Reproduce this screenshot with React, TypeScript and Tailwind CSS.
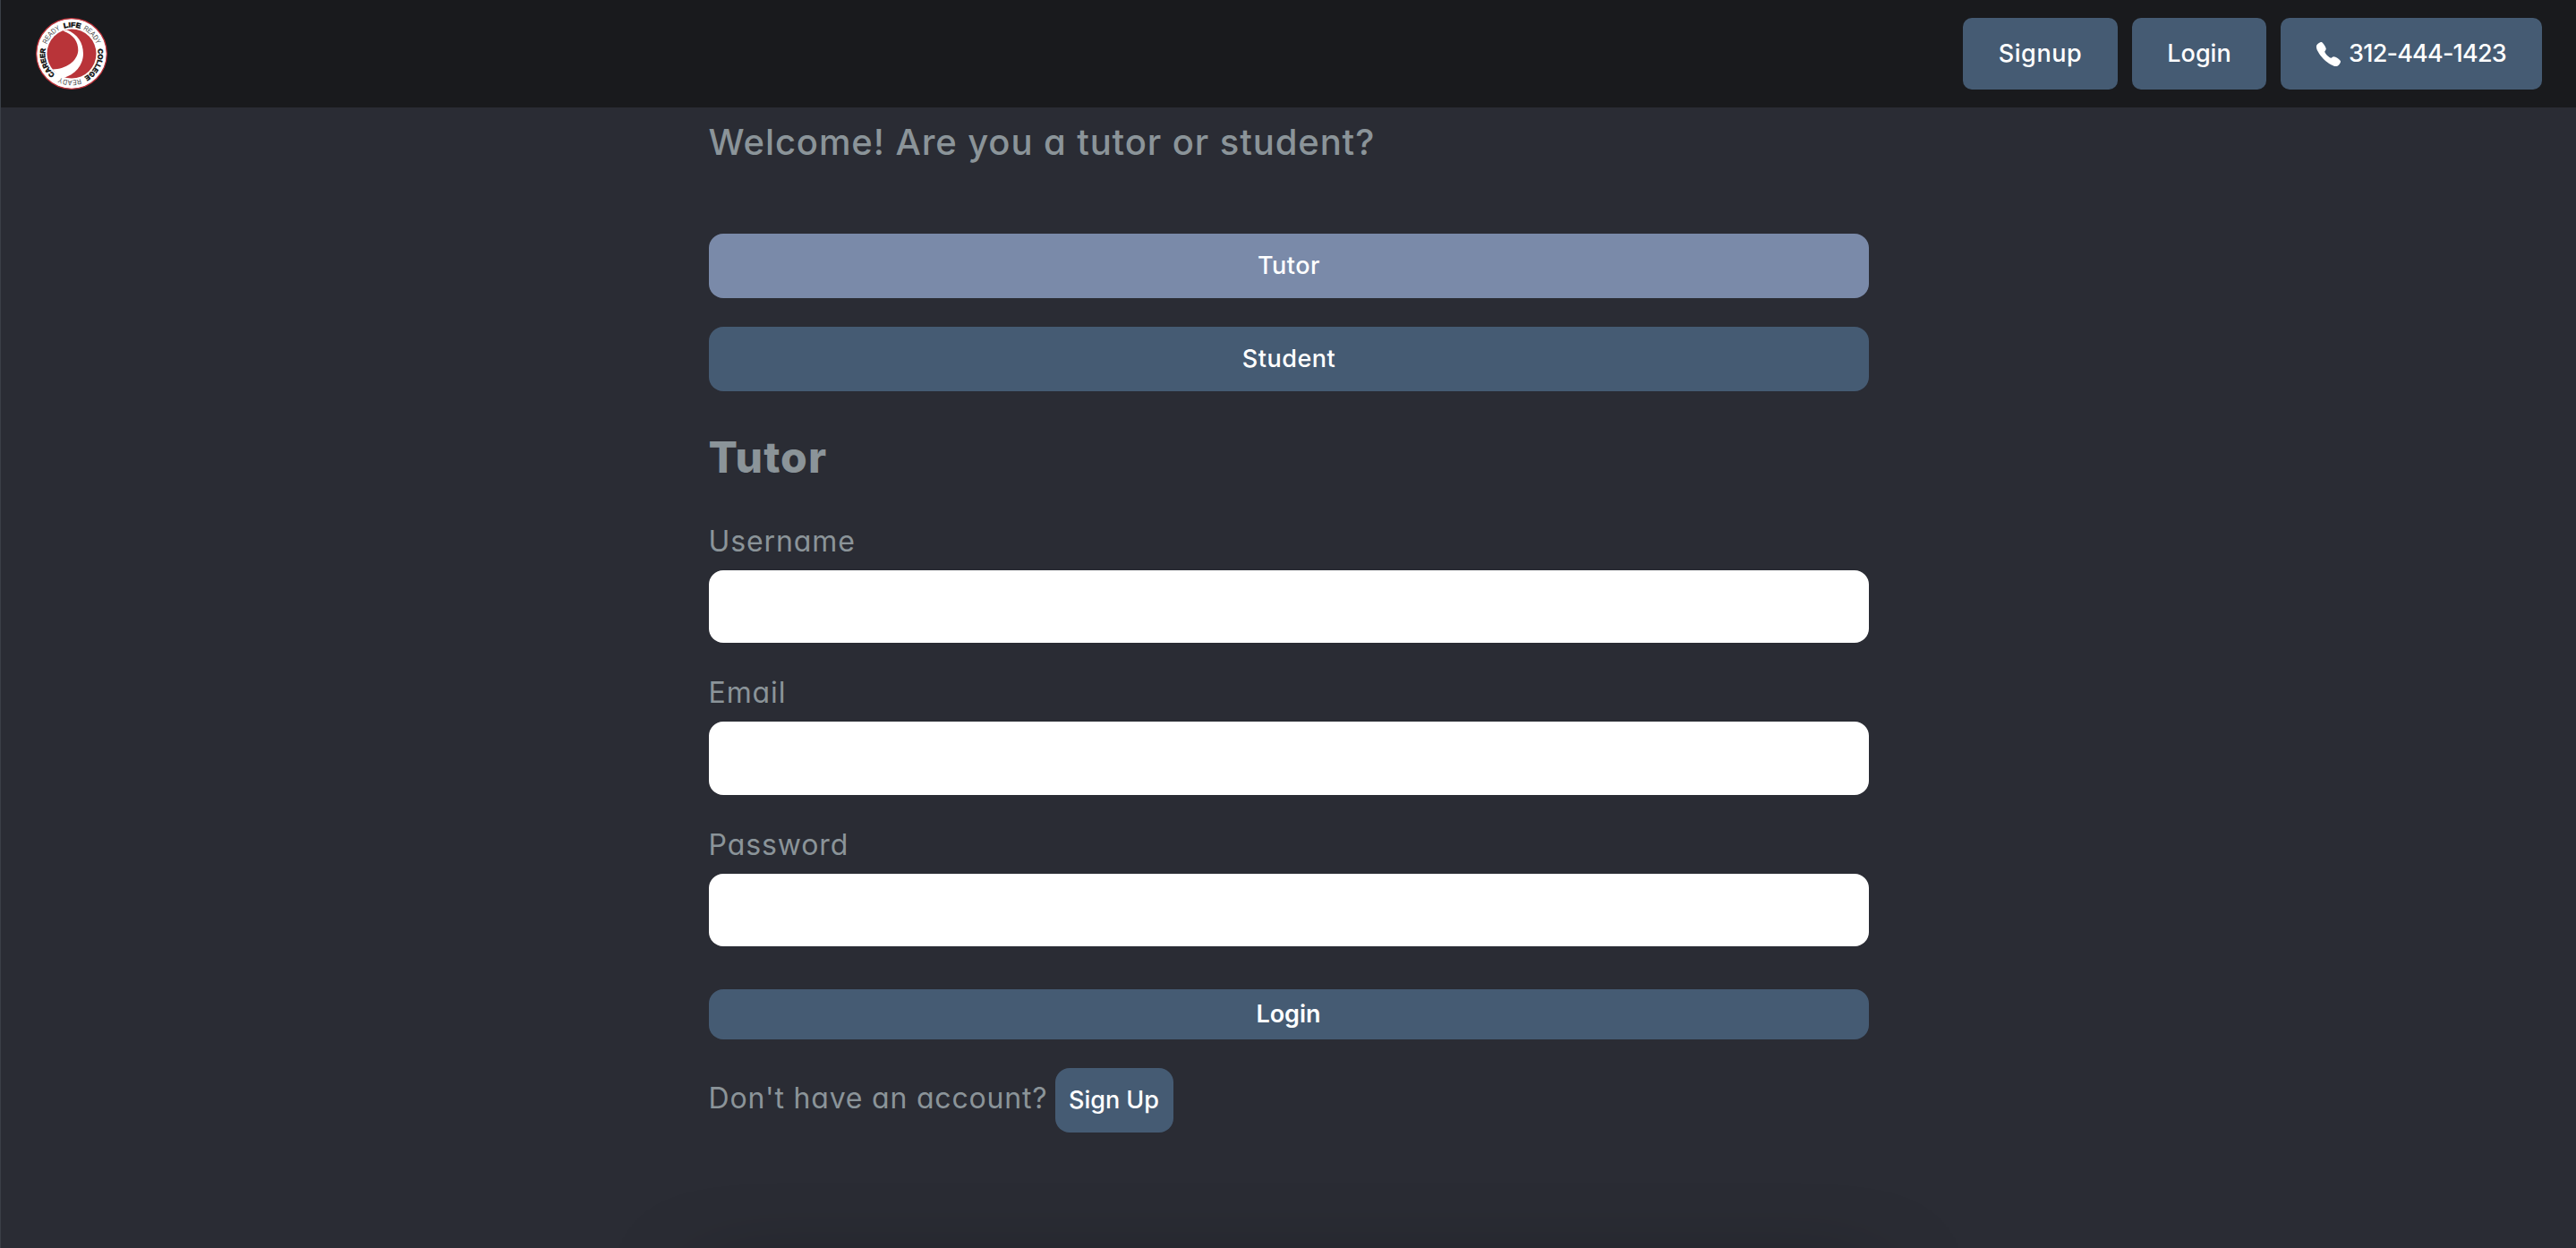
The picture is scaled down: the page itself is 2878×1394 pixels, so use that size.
import React from "react";
import { clsx } from "clsx";
import { IoCall } from "react-icons/io5";

const navButton =
  "flex h-20 items-center justify-center rounded-[10px] bg-[#455b73] text-[27px] font-medium text-white";

const ringWords = [
  { text: "CAREER", start: 3.1, length: 32, bold: true },
  { text: "READY", start: 40, length: 23, bold: false },
  { text: "LIFE", start: 67.3, length: 18.5, bold: true },
  { text: "READY", start: 88.8, length: 23, bold: false },
  { text: "COLLEGE", start: 117, length: 37, bold: true },
  { text: "READY", start: 158.6, length: 24, bold: false },
];

function Logo() {
  return (
    <svg width="80" height="80" viewBox="0 0 80 80" aria-label="College Ready">
      <defs>
        <path
          id="ring"
          d="M23.8 64.9 A29.7 29.7 0 0 1 56.2 15.1 A29.7 29.7 0 0 1 23.8 64.9"
        />
      </defs>
      <circle cx="40" cy="40" r="39.3" fill="#ffffff" stroke="#c4343c" strokeWidth="1.2" />
      <circle cx="40" cy="40" r="27.5" fill="#b93439" />
      <path
        d="M30.5 14.6 C42 18.5 47.6 27 47.3 36.5 C46.6 48 34 57.3 18.8 57.4 C22 61.8 26 65 31 66.8 C43.5 63.8 53 53 53 40 C53 27.5 46.5 18 34.5 13.2 Z"
        fill="#ffffff"
      />
      <g fontFamily="Liberation Sans">
        {ringWords.map((word) => (
          <text
            key={word.start}
            fontSize={word.bold ? 7.8 : 8.2}
            fontWeight={word.bold ? 700 : 400}
            fill={word.bold ? "#0c0c0c" : "#444444"}
            stroke={word.bold ? "#0c0c0c" : "none"}
            strokeWidth="0.5"
          >
            <textPath
              href="#ring"
              startOffset={word.start}
              textLength={word.length}
              lengthAdjust="spacingAndGlyphs"
            >
              {word.text}
            </textPath>
          </text>
        ))}
      </g>
    </svg>
  );
}

function RoleButton({ label, active }: { label: string; active?: boolean }) {
  return (
    <button
      type="button"
      className={clsx(
        "flex h-18 w-full items-center justify-center rounded-2xl pl-px text-[27px] font-medium tracking-[0.5px] text-white",
        active ? "bg-[#7a8aa9]" : "bg-[#455b73]",
      )}
    >
      <span>{label}</span>
    </button>
  );
}

function Field({ label, type }: { label: string; type: string }) {
  return (
    <label className="block">
      <span className="block h-12 text-[32px] leading-[47px] tracking-[0.9px]">{label}</span>
      <input
        type={type}
        className="mt-2 block h-[81.5px] w-full rounded-2xl bg-white px-6 text-black"
      />
    </label>
  );
}

export default function App() {
  return (
    <div className="flex h-[1394px] flex-col overflow-hidden border-l border-[#3a3f47] bg-[#2a2c34] font-[Inter,sans-serif] text-[#8b9499] [font-feature-settings:'cv11']">
      <header className="flex h-30 shrink-0 items-center justify-between bg-[#191a1d] pr-[38px] pl-[39px]">
        <Logo />
        <nav className="flex gap-4">
          <button type="button" className={clsx(navButton, "w-[173px] tracking-[0.6px]")}>
            <span>Signup</span>
          </button>
          <button type="button" className={clsx(navButton, "w-[150px]")}>
            <span>Login</span>
          </button>
          <button type="button" className={clsx(navButton, "w-[292px] gap-[7px] pr-0.5")}>
            <IoCall className="size-[31px]" />
            <span className="tracking-[-0.8px]">312-444-1423</span>
          </button>
        </nav>
      </header>

      <main className="mx-auto w-[1296px] grow pt-[9px]">
        <p className="text-[40px] leading-[60px] font-medium tracking-[0.9px]">
          Welcome! Are you a tutor or student?
        </p>
        <div className="mt-18 flex flex-col gap-8">
          <RoleButton label="Tutor" active />
          <RoleButton label="Student" />
        </div>

        <h1 className="mt-[38px] text-[48px] leading-[72px] font-extrabold tracking-[1.1px]">
          Tutor
        </h1>
        <form className="mt-[33.8px]">
          <div className="flex flex-col gap-8">
            <Field label="Username" type="text" />
            <Field label="Email" type="email" />
            <Field label="Password" type="password" />
          </div>
          <button
            type="button"
            className="mt-12 flex h-14 w-full items-center justify-center rounded-2xl bg-[#455b73] text-[27px] font-semibold text-white"
          >
            <span>Login</span>
          </button>
        </form>
        <div className="mt-8 flex h-18 items-center gap-[9px]">
          <span className="w-[378px] pb-1 text-[32px] tracking-[0.8px] whitespace-nowrap">
            Don't have an account?
          </span>
          <button
            type="button"
            className="flex h-18 w-[132px] items-center justify-center rounded-2xl bg-[#455b73] text-[27px] font-medium text-white"
          >
            <span>Sign Up</span>
          </button>
        </div>
      </main>

      {/* Shadow of the card below the fold */}
      <div className="mx-auto h-px w-[1296px] shrink-0">
        <div className="mt-12 h-60 rounded-2xl shadow-[0_0_100px_rgba(0,0,0,0.5)]" />
      </div>
    </div>
  );
}
